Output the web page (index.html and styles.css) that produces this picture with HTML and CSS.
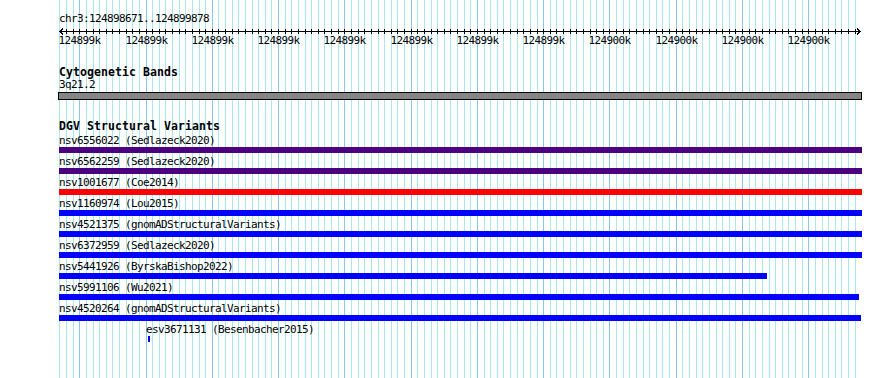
FILE: index.html
```html
<!DOCTYPE html>
<html>
	<head>
		<title>DGV Browser</title>
		<link rel="stylesheet" href="styles.css">
	</head>
	<body>
		<div id="panel" class="panel">
			<div class="seg_name">chr3:124898671..124899878</div>
			<svg id="ruler" class="ruler" width="831" height="22"></svg>

			<div class="track_title cyto_title">Cytogenetic Bands</div>
			<div class="label band_name">3q21.2</div>
			<div class="band"></div>

			<div class="track_title dgv_title">DGV Structural Variants</div>
			<div class="features">
				<div class="feature">
					<div class="label">nsv6556022 (Sedlazeck2020)</div>
					<div class="bar purple" style="width:803px"></div>
				</div>
				<div class="feature">
					<div class="label">nsv6562259 (Sedlazeck2020)</div>
					<div class="bar purple" style="width:803px"></div>
				</div>
				<div class="feature">
					<div class="label">nsv1001677 (Coe2014)</div>
					<div class="bar red" style="width:803px"></div>
				</div>
				<div class="feature">
					<div class="label">nsv1160974 (Lou2015)</div>
					<div class="bar blue" style="width:803px"></div>
				</div>
				<div class="feature">
					<div class="label">nsv4521375 (gnomADStructuralVariants)</div>
					<div class="bar blue" style="width:803px"></div>
				</div>
				<div class="feature">
					<div class="label">nsv6372959 (Sedlazeck2020)</div>
					<div class="bar blue" style="width:803px"></div>
				</div>
				<div class="feature">
					<div class="label">nsv5441926 (ByrskaBishop2022)</div>
					<div class="bar blue" style="width:708px"></div>
				</div>
				<div class="feature">
					<div class="label">nsv5991106 (Wu2021)</div>
					<div class="bar blue" style="width:800px"></div>
				</div>
				<div class="feature">
					<div class="label">nsv4520264 (gnomADStructuralVariants)</div>
					<div class="bar blue" style="width:802px"></div>
				</div>
				<div class="feature">
					<div class="label" style="margin-left:87px">esv3671131 (Besenbacher2015)</div>
					<div class="bar blue" style="margin-left:89px;width:2px"></div>
				</div>
			</div>
		</div>
		<script>

			// region chr3:124898670.. drawn from x=59, one grid line per 10bp
			var X0 = 59.4;
			var STEP = 6.6273;
			var N = 120;
			var START_BP = 124898670;
			var LEFT = 59;

			var panel = document.getElementById("panel");
			var ruler = document.getElementById("ruler");

			function gx(k)
			{
				return Math.round(X0 + k * STEP);
			}

			//GRID LINES AS BACKGROUND
			var imgs = [];
			var pos = [];
			for(var k = 0; k <= N; k++)
			{
				var c = (k % 10 == 3) ? "#86c8ee" : "#a8e8ee";
				imgs.push("linear-gradient(" + c + "," + c + ")");
				pos.push(gx(k) + "px 0");
			}
			panel.style.backgroundImage = imgs.join(",");
			panel.style.backgroundPosition = pos.join(",");

			//RULER
			var s = "";
			s += '<line x1="1" y1="7.5" x2="801" y2="7.5" class="rl"/>';
			s += '<polyline points="4,4.5 1,7.5 4,10.5" class="rl"/>';
			s += '<polyline points="798,4.5 801,7.5 798,10.5" class="rl"/>';
			for(var k = 1; k <= N; k++)
			{
				var x = gx(k) - LEFT + 0.5;
				s += '<line x1="' + x + '" y1="5" x2="' + x + '" y2="10" class="rl"/>';
				if(k % 10 == 3)
				{
					var bp = START_BP + k * 10;
					s += '<text x="' + x + '" y="19.5" text-anchor="middle">' + Math.round(bp / 1000) + 'k</text>';
				}
			}
			ruler.innerHTML = s;

		</script>
	</body>
</html>
```

FILE: styles.css
```css
body
{
	margin:0;
	background:#fff;
	font-family:"DejaVu Sans Mono", "Liberation Mono", monospace;
	font-size:11px;
	letter-spacing:-0.62px;
	color:#000;
}
.panel
{
	width:890px;
	height:378px;
	box-sizing:border-box;
	padding-top:13px;
	padding-left:59px;
	background-color:#fff;
	background-size:1px 100%;
	background-repeat:no-repeat;
}
/*=============================*/
.seg_name
{
	line-height:11px;
	white-space:nowrap;
}
.ruler
{
	display:block;
	overflow:visible;
}
.ruler .rl
{
	stroke:#000;
	stroke-width:1;
	fill:none;
	shape-rendering:crispEdges;
}
.ruler text
{
	font-family:"DejaVu Sans Mono", "Liberation Mono", monospace;
	font-size:11px;
	letter-spacing:-0.62px;
	fill:#000;
}
/*=============================*/
.track_title
{
	font-size:11.5px;
	font-weight:bold;
	letter-spacing:0.08px;
	line-height:12px;
	white-space:nowrap;
}
.cyto_title
{
	margin-top:20px;
}
.band_name
{
	margin-top:1px;
}
.dgv_title
{
	margin-top:20px;
}
.label
{
	line-height:11px;
	white-space:nowrap;
}
.band
{
	margin-top:2px;
	margin-left:-1px;
	width:802px;
	height:6px;
	border:1px solid #000;
	background:#858585;
}
/*=============================*/
.features
{
	margin-top:3px;
}
.feature
{
	margin-bottom:3px;
}
.bar
{
	margin-top:1px;
	height:6px;
}
.purple
{
	background:#4b0082;
}
.red
{
	background:#ff0000;
}
.blue
{
	background:#0000ff;
}
```
